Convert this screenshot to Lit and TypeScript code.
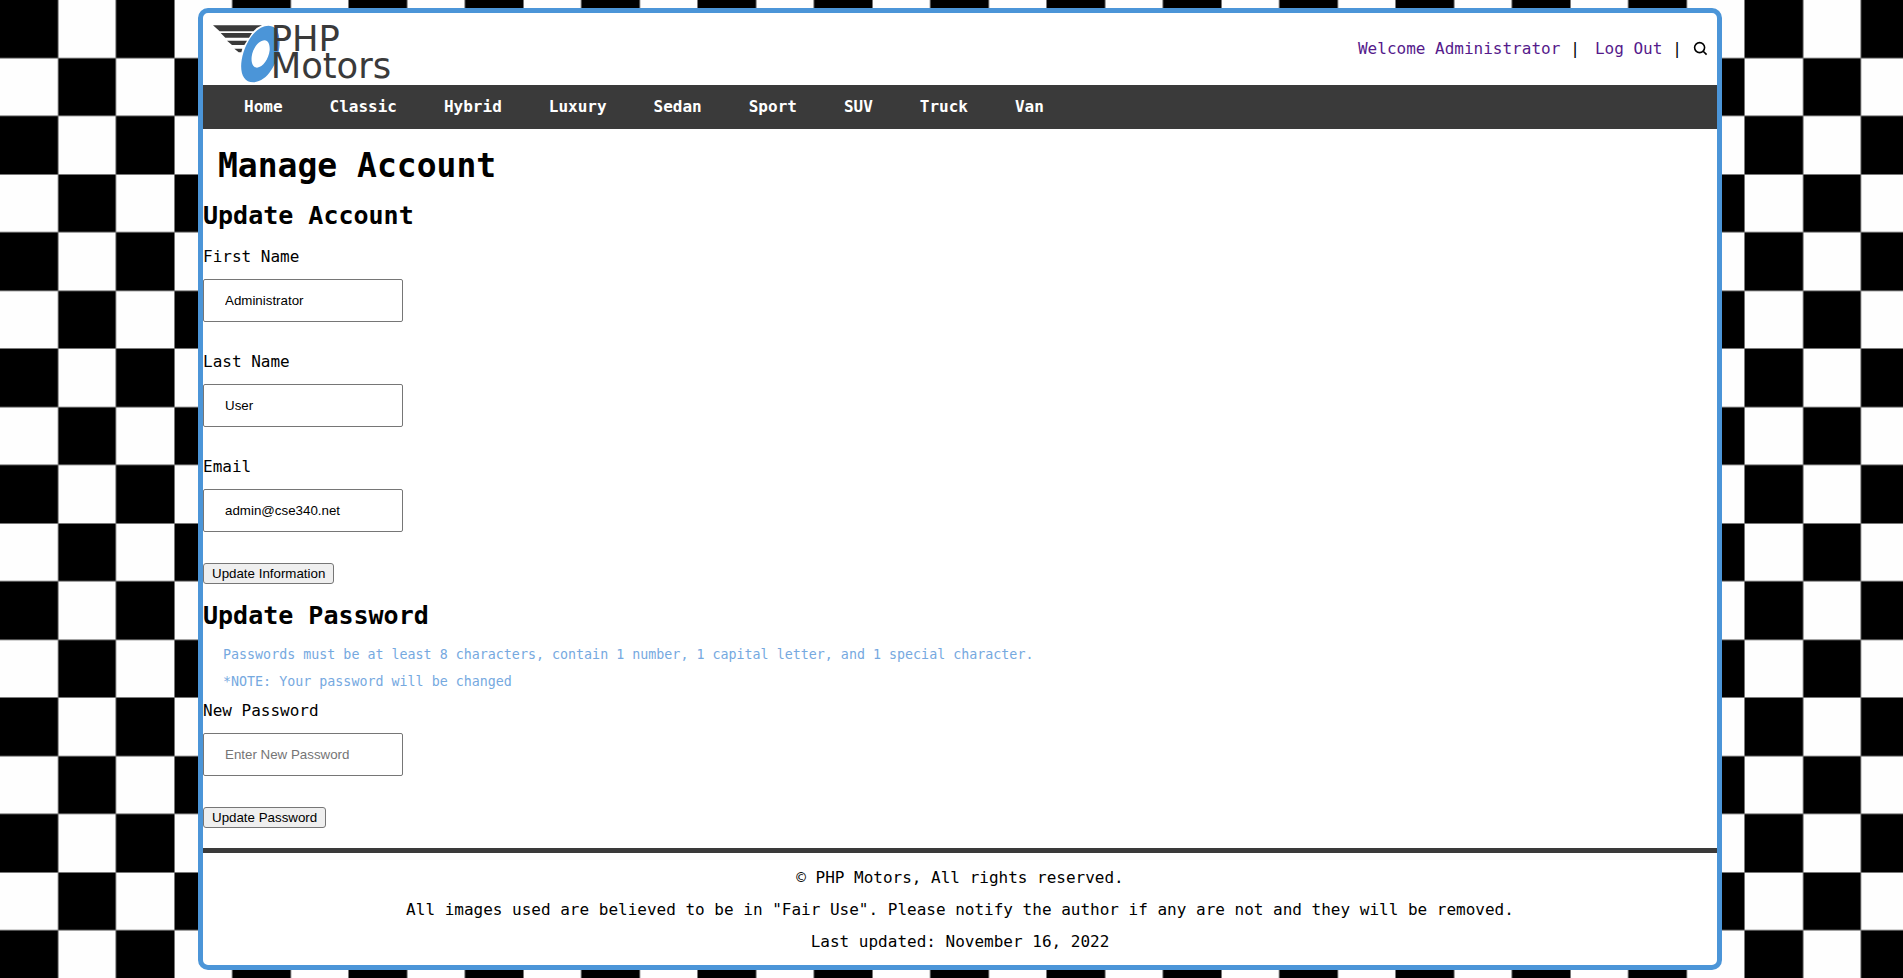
import { LitElement, html, css, svg } from "lit";
import { customElement, property } from "lit/decorators.js";

const NAV = ["Home", "Classic", "Hybrid", "Luxury", "Sedan", "Sport", "SUV", "Truck", "Van"];

@customElement("motors-logo")
export class MotorsLogo extends LitElement {
  static styles = css`
    :host {
      display: block;
      padding-top: 10px;
    }
    .logo {
      display: block;
      width: 184px;
      height: 60px;
      overflow: visible;
    }
    .word {
      font-family: "DejaVu Sans", sans-serif;
      font-size: 106px;
      fill: #3a3a3a;
    }
  `;

  render() {
    return html`
      <svg class="logo" viewBox="66 72 552 180" role="img" aria-label="PHP Motors">
        ${svg`
          <path fill="#3a3a3a" d="M69 76H216L200 84L190 94H89Z M92 99H186L177 113H106Z M111 122H171L163 135H126Z M133 146H157L154 157H146Z" />
          <path fill="#4b95d8" fill-rule="evenodd"
            d="M236 77C262 78 272 104 268 142C263 190 232 246 190 247C160 247 149 217 155 180C163 132 196 77 236 77Z
               M224 121C206 121 188 145 185 170C183 190 189 203 201 203C219 202 236 177 239 151C240 134 235 121 224 121Z" />
          <text class="word" x="242" y="152">PHP</text>
          <text class="word" x="242" y="233">Motors</text>
        `}
      </svg>
    `;
  }
}

@customElement("app-root")
export class AppRoot extends LitElement {
  @property() firstName = "Administrator";
  @property() lastName = "User";
  @property() email = "admin@cse340.net";

  static styles = css`
    :host {
      display: block;
      box-sizing: border-box;
      min-height: 100vh;
      padding: 8px 181px 8px 198px;
      background-color: #fefefe;
      background-image: url("data:image/svg+xml,%3Csvg xmlns='http://www.w3.org/2000/svg' viewBox='0 0 360 360'%3E%3Cdefs%3E%3Cpattern id='c' width='120' height='120' patternUnits='userSpaceOnUse'%3E%3Crect width='120' height='120' fill='%23fefefe'/%3E%3Cpath d='M0 0H60V60H0zM60 60H120V120H60z'/%3E%3Cpath d='M0 60H120M60 0V120M0 119.5H120M119.5 0V120' stroke='%23777' stroke-width='1'/%3E%3C/pattern%3E%3C/defs%3E%3Crect width='360' height='360' fill='url(%23c)'/%3E%3C/svg%3E");
      background-size: 349px 349px;
      font-family: "DejaVu Sans Mono", monospace;
      font-size: 16px;
      line-height: 32px;
      color: #000;
    }
    .page {
      border: 5px solid #4b95d8;
      border-radius: 10px;
      background: #fff;
    }
    .header {
      display: flex;
      align-items: center;
      justify-content: space-between;
      height: 72px;
      padding: 0 9px;
    }
    .account {
      display: flex;
      align-items: center;
      gap: 10px;
    }
    .account a {
      color: #551a8b;
      text-decoration: none;
    }
    .account .logout {
      margin-left: 5px;
    }
    .search {
      display: flex;
      padding: 0;
      border: 0;
      background: none;
    }
    .nav ul {
      display: flex;
      gap: 47px;
      margin: 0;
      padding: 0 41px;
      list-style: none;
      background: #3a3a3a;
      line-height: 44px;
    }
    .nav a {
      color: #fff;
      font-weight: bold;
      text-decoration: none;
    }
    h1 {
      margin: 0;
      padding: 17px 15px 14px;
      font-size: 33px;
      line-height: 40px;
    }
    h2 {
      margin: 0 0 9px;
      font-size: 25px;
      line-height: 32px;
    }
    .main {
      padding-bottom: 20px;
    }
    form + h2 {
      margin-top: 16px;
    }
    .field {
      display: flex;
      flex-direction: column;
      align-items: flex-start;
      gap: 6px;
      margin-bottom: 24px;
    }
    .field input {
      box-sizing: border-box;
      width: 200px;
      height: 43px;
      padding: 0 21px;
      border: 1px solid #767676;
      border-radius: 2px;
      background: #fff;
      color: #000;
      font-family: "Liberation Sans", sans-serif;
      font-size: smaller;
    }
    .field input::placeholder {
      color: #757575;
    }
    .submit {
      display: block;
      height: 21px;
      margin-top: 31px;
      padding: 0 8px;
      border: 1px solid #767676;
      border-radius: 3px;
      background: #efefef;
      color: #000;
      font-family: "Liberation Sans", sans-serif;
      font-size: smaller;
      line-height: 19px;
    }
    .note {
      margin: 0;
      padding-left: 20px;
      color: #76a9df;
      font-size: smaller;
      line-height: 27px;
    }
    .footer {
      padding: 9px 0 7px;
      border-top: 5px solid #3a3a3a;
      text-align: center;
    }
    .footer p {
      margin: 0;
    }
  `;

  private field(id: string, label: string, type: string, value = "", placeholder = "") {
    return html`
      <div class="field">
        <label for=${id}>${label}</label>
        <input id=${id} name=${id} type=${type} .value=${value} placeholder=${placeholder} />
      </div>
    `;
  }

  private keep(e: Event) {
    e.preventDefault();
  }

  render() {
    return html`
      <div class="page">
        <header class="header">
          <motors-logo></motors-logo>
          <div class="account">
            <a href="#account">Welcome Administrator</a>
            <span>|</span>
            <a class="logout" href="#logout">Log Out</a>
            <span>|</span>
            <button class="search" type="button" aria-label="Search">
              <svg width="16" height="16" viewBox="0 0 16 16" fill="none" stroke="#000" stroke-width="1.6">
                <circle cx="7.6" cy="6.6" r="5" />
                <path d="M11.2 10.2L14.6 13.6" />
              </svg>
            </button>
          </div>
        </header>
        <nav class="nav">
          <ul>
            ${NAV.map((name) => html`<li><a href="#${name.toLowerCase()}">${name}</a></li>`)}
          </ul>
        </nav>
        <main class="main">
          <h1>Manage Account</h1>
          <h2>Update Account</h2>
          <form @submit=${this.keep}>
            ${this.field("firstname", "First Name", "text", this.firstName)}
            ${this.field("lastname", "Last Name", "text", this.lastName)}
            ${this.field("email", "Email", "email", this.email)}
            <button class="submit">Update Information</button>
          </form>
          <h2>Update Password</h2>
          <form @submit=${this.keep}>
            <p class="note">
              Passwords must be at least 8 characters, contain 1 number, 1 capital letter, and 1 special character.
            </p>
            <p class="note">*NOTE: Your password will be changed</p>
            ${this.field("password", "New Password", "password", "", "Enter New Password")}
            <button class="submit">Update Password</button>
          </form>
        </main>
        <footer class="footer">
          <p>© PHP Motors, All rights reserved.</p>
          <p>
            All images used are believed to be in "Fair Use". Please notify the author if any are not and they will be
            removed.
          </p>
          <p>Last updated: November 16, 2022</p>
        </footer>
      </div>
    `;
  }
}
